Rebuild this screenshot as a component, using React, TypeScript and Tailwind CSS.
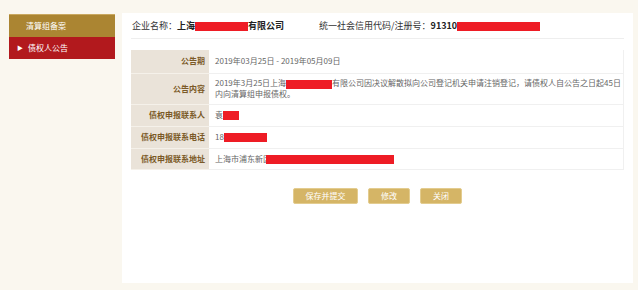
const rows = [
  { label: '公告期', h: 'h-[23px]', value: <span>2019年03月25日 - 2019年05月09日</span> },
  {
    label: '公告内容',
    h: 'h-[31px]',
    value: (
      <div className="leading-[10px]">
        <div className="whitespace-nowrap">
          2019年3月25日上海<Redact w="w-[46px]" />有限公司因决议解散拟向公司登记机关申请注销登记，请债权人自公告之日起45日
        </div>
        <div>内向清算组申报债权。</div>
      </div>
    ),
  },
  { label: '债权申报联系人', h: 'h-[22px]', value: <span>袁<Redact w="w-[16px]" /></span> },
  { label: '债权申报联系电话', h: 'h-[22px]', value: <span>18<Redact w="w-[43px]" /></span> },
  {
    label: '债权申报联系地址',
    h: 'h-[21px]',
    value: (
      <span>
        上海市浦东新区<Redact w="w-[128px] -ml-[5px]" />
      </span>
    ),
  },
];

function Redact({ w }: { w: string }) {
  return <span className={`inline-block h-[9px] align-middle bg-[#ee1c25] ${w}`} />;
}

export default function App() {
  return (
    <div
      className="w-[638px] h-[290px] bg-[#faf7ef] flex overflow-hidden"
      style={{ fontFamily: '"Noto Sans CJK SC", "Noto Sans", sans-serif' }}
    >
      {/* sidebar */}
      <aside className="w-[115px] pl-[9px] pt-[14px] shrink-0">
        <div className="w-[106px] h-[23px] bg-[#ab8532] border-t border-[#c9a860] text-white text-[8px] flex items-center pl-[17px]">
          清算组备案
        </div>
        <div className="w-[106px] h-[22px] bg-[#b2191d] text-white text-[8px] flex items-center pl-[8px] gap-[5px]">
          <span className="text-[6px] leading-none">▶</span>
          债权人公告
        </div>
      </aside>

      {/* main panel */}
      <main className="ml-[7px] mt-[13px] w-[511px] h-[270px] bg-white shrink-0">
        <div className="mx-[9px] h-[26px] border-b border-[#eeeeee] flex items-center text-[9px] text-[#333] pl-[1px]">
          <span>企业名称：</span>
          <span className="font-bold text-[#222]">
            上海<Redact w="w-[53px]" />有限公司
          </span>
          <span className="ml-[35px]">统一社会信用代码/注册号：</span>
          <span className="font-bold text-[#222]">
            91310<Redact w="w-[83px]" />
          </span>
        </div>

        <table className="mx-[9px] mt-[11px] w-[493px] border-collapse text-[8px]">
          <tbody>
            {rows.map((r) => (
              <tr key={r.label} className={r.h}>
                <td className="w-[78px] bg-[#eae3d9] text-right pr-[4px] font-bold text-[#7b5a27] border-b border-[#f5f1ea]">
                  {r.label}
                </td>
                <td className="pl-[6px] text-[#666] border-b border-r border-[#f0f0f0]">{r.value}</td>
              </tr>
            ))}
          </tbody>
        </table>

        <div className="mt-[18px] flex justify-center gap-[10px] text-[8px] text-white">
          <button className="w-[65px] h-[16px] rounded-[2px] bg-[#d5b566] border border-[#e3cc8f]">保存并提交</button>
          <button className="w-[42px] h-[16px] rounded-[2px] bg-[#d5b566] border border-[#e3cc8f]">修改</button>
          <button className="w-[42px] h-[16px] rounded-[2px] bg-[#d5b566] border border-[#e3cc8f]">关闭</button>
        </div>
      </main>
    </div>
  );
}
